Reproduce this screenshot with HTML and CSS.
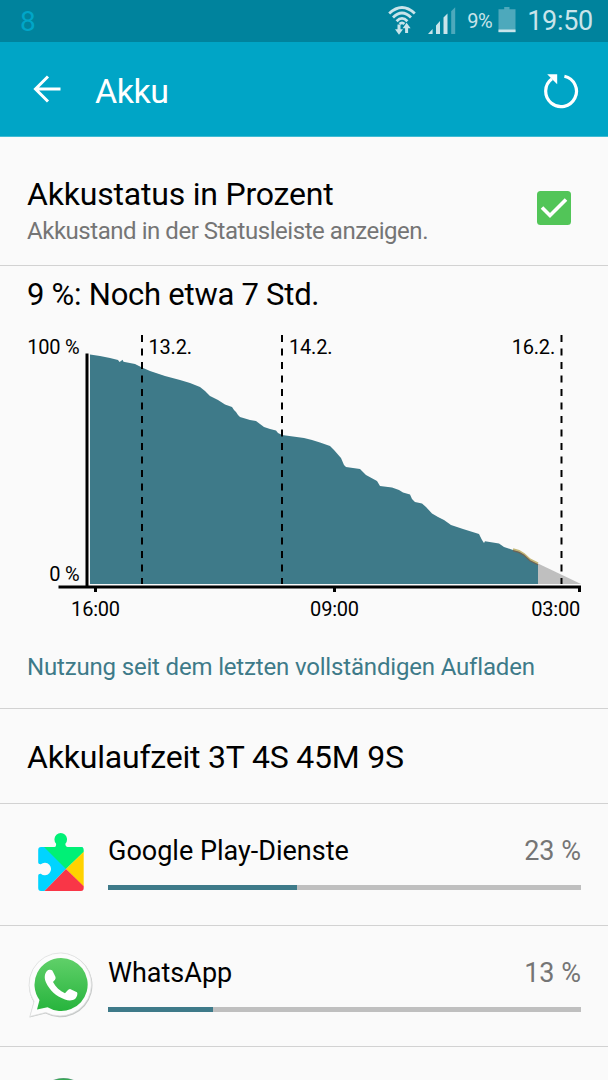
FILE: index.html
```html
<!DOCTYPE html>
<html lang="de">
<head>
  <meta charset="UTF-8" />
  <meta name="viewport" content="width=device-width, initial-scale=1.0" />
  <title>Akku</title>
  <link rel="stylesheet" href="styles.css">
</head>
<body>
  <div class="statusbar">
    <span class="notification">8</span>
    <div class="status-icons">
      <svg class="wifi" width="30" height="32" viewBox="0 0 30 32" fill="none" stroke="#c9e4ea" stroke-width="2.8">
        <path d="M2.2 9.5Q15 -2.5 27.8 9.5" />
        <path d="M6 13.5Q15 4.6 24 13.5" />
        <path d="M9.6 17.2Q15 11.6 20.4 17.2" />
        <path d="M12.6 20Q15 17.6 17.4 20" />
        <path d="M12 20.5v7M19.6 29v-7" stroke-width="3" />
        <path d="M8 25.2h8l-4 5.6zM15.6 24.3h8l-4-5.6z" fill="#c9e4ea" stroke="none" />
      </svg>
      <svg class="signal" width="28" height="28" viewBox="0 0 28 28" fill="#c9e4ea">
        <path d="M0 27L4.6 22V27zM8 27V18.5l4-4.5v13zM15.5 27V10.5l4-4v20.5z" />
        <path d="M23.2 27V4.2l4-4v26.8z" fill="#4da9bc" />
      </svg>
      <span class="percent">9%</span>
      <svg class="battery" width="18" height="26" viewBox="0 0 18 26">
        <path d="M6.2 0h5.3v2.3h6V25H.5V2.3h5.7z" fill="#4da9bc" />
        <path d="M.5 22.5h17v2.7H.5z" fill="#c9e4ea" />
      </svg>
      <span class="clock">19:50</span>
    </div>
  </div>

  <header class="header">
    <svg class="back" width="28" height="28" viewBox="0 0 28 28" fill="none" stroke="#fff" stroke-width="3">
      <path d="M15 1.5L2.5 14L15 26.5M2.5 14H27.5" />
    </svg>
    <h1>Akku</h1>
    <svg class="refresh" width="36" height="36" viewBox="0 0 36 36" fill="none" stroke="#fff" stroke-width="3.2">
      <path d="M21.4 3.2A15.4 15.4 0 1 1 9 5.8" />
      <path d="M4.2 1.2H14.2V11.2z" fill="#fff" stroke="none" />
    </svg>
  </header>

  <section class="setting">
    <div>
      <h2>Akkustatus in Prozent</h2>
      <p>Akkustand in der Statusleiste anzeigen.</p>
    </div>
    <svg class="checkbox" width="34" height="34" viewBox="0 0 34 34">
      <rect width="34" height="34" rx="3.5" fill="#52c558" />
      <path d="M5 16.5L13 24.5L29 8.5" fill="none" stroke="#fff" stroke-width="3.6" />
    </svg>
  </section>

  <section class="usage">
    <h2>9 %: Noch etwa 7 Std.</h2>
    <svg class="chart" width="608" height="300" viewBox="0 325 608 300">
      <!-- remaining time -->
      <path d="M538 563.5L581 584H538z" fill="#bfbfbf" />
      <!-- battery level -->
      <path fill="#3e7a89" d="M90 584V354.5L100 356L110 358L118 360L119.5 362L121 361L122.5 359.8L123.5 361.8L135 364L142 367.5L150 371L165 376L180 380L190 383L200 387L205 391L210 396L218 400L225 404.5L232 407L234 410L236 412L238 415L240 417L250 420L256 421L260 424L264 427L270 429L276 430.5L278 433L282 435L304 438L312 440L320 442.5L330 446L334 450L341 458L344 465L346 467L360 469L366 475L377 481L380 486L392 487.5L399 490L403 492.5L410 494.5L412 499L415 502L422 503.5L426 507L432 513.5L438 517L444 520L451 525L463 529L479 534L482 540L484 543L485 541.3L499 543.5L504 547L513 550L519 551.5L524 554L530 560L538 564V584z" />
      <path d="M513 549.3L519 551L524 554L530 559.5L538 563.3" fill="none" stroke="#c4b778" stroke-width="2" />
      <path d="M513 550.7L519 552.4L524 555.2L530 560.7L538 564.7" fill="none" stroke="#6f6355" stroke-width="1.2" />
      <path d="M142 335V584M282 335V584M561.5 335V584" stroke="#000" stroke-width="2" stroke-dasharray="7 6.5" />
      <path d="M58.5 587H581M87 353.5V587" stroke="#000" stroke-width="3" fill="none" />
      <path d="M95.5 587v5M334.5 587v5M579.5 587v5" stroke="#000" stroke-width="3" />
      <g class="chart-text">
        <text x="79.5" y="353.5" text-anchor="end">100 %</text>
        <text x="79.5" y="580.5" text-anchor="end">0 %</text>
        <text x="148.5" y="353.5">13.2.</text>
        <text x="289" y="353.5">14.2.</text>
        <text x="555" y="353.5" text-anchor="end">16.2.</text>
        <text x="95.5" y="616" text-anchor="middle">16:00</text>
        <text x="334.5" y="616" text-anchor="middle">09:00</text>
        <text x="580" y="616" text-anchor="end">03:00</text>
      </g>
    </svg>
    <p>Nutzung seit dem letzten vollständigen Aufladen</p>
  </section>

  <section class="runtime">
    <h2>Akkulaufzeit 3T 4S 45M 9S</h2>
  </section>

  <div class="app">
    <svg class="app-icon" width="66" height="66" viewBox="0 0 66 66">
      <defs>
        <clipPath id="puzzle">
          <path d="M13 17H26.5Q28.5 17 28 13.5A6.3 6.3 0 1 1 37.5 13.5Q37 17 39.5 17H53Q55.7 17 55.7 20V58Q55.7 61 53 61H13Q10.2 61 10.2 58V45.5Q10.2 43.5 12.8 43.7A6.2 6.2 0 1 0 12.8 34.3Q10.2 34.5 10.2 32.5V20Q10.2 17 13 17z" />
        </clipPath>
      </defs>
      <g clip-path="url(#puzzle)">
        <path d="M56 17L38 39L16.5 61H0V17H16z" fill="#00d4ff" />
        <path d="M0 0H66V12L38 39L16 17z" fill="#00f076" />
        <path d="M57 20.5V58L38 39z" fill="#ffd200" />
        <path d="M16 61.5L38 39L57 57.5V62z" fill="#f93647" />
      </g>
    </svg>
    <div class="app-info">
      <div class="app-label"><span>Google Play-Dienste</span><span class="value">23 %</span></div>
      <div class="bar"><div class="fill" style="width: 40%"></div></div>
    </div>
  </div>

  <div class="app">
    <svg class="app-icon" width="66" height="66" viewBox="0 0 66 66">
      <defs>
        <linearGradient id="green" x1="0" y1="0" x2="0" y2="1">
          <stop offset="0" stop-color="#60d069" />
          <stop offset="1" stop-color="#27b43d" />
        </linearGradient>
      </defs>
      <path d="M33 1.2A32 32 0 1 1 17.5 61.5L1.5 65.5L5.7 50A32 32 0 0 1 33 1.2z" fill="#c4c7c6" />
      <path d="M33 .9A31.5 31.5 0 1 1 17.7 60.5L1.9 64.5L6.1 49.5A31.5 31.5 0 0 1 33 .9z" fill="#fcfcfc" stroke="#dedfdf" stroke-width=".8" />
      <path d="M33 6A26.5 26.5 0 1 1 19.5 55.2L9 57.5L11.5 48A26.5 26.5 0 0 1 33 6z" fill="url(#green)" />
      <path d="M19 19C20 17.8 23 17.3 24.3 18.5C25.5 20.5 26.5 23 27.5 25C28 27 26.5 28.5 25 30C27.5 35 32 39 37 41.2C39 39.5 40 37 42 37L49 40.2C50 41.5 49 45 47.5 46.5C44.5 49 40.5 48.8 37 47.5C27.5 44 22 38.5 18 30.5C16 26 16.5 21.5 19 19z" fill="#fff" />
    </svg>
    <div class="app-info">
      <div class="app-label"><span>WhatsApp</span><span class="value">13 %</span></div>
      <div class="bar"><div class="fill" style="width: 22.2%"></div></div>
    </div>
  </div>

  <div class="app next">
    <svg class="app-icon" width="66" height="66" viewBox="0 0 66 66">
      <circle cx="35.5" cy="28" r="28" fill="#6f9c8e" />
      <circle cx="35.5" cy="28.6" r="28" fill="#35a852" />
    </svg>
  </div>
</body>
</html>
```
FILE: styles.css
```css
* {
  box-sizing: border-box;
}
body {
  margin: 0;
  height: 1080px;
  overflow: hidden;
  background: #fafafa;
  color: #000;
  font-family: Roboto, sans-serif;
}
h1, h2, p {
  margin: 0;
  font-weight: normal;
  white-space: nowrap;
}
svg {
  display: block;
  flex: none;
}
.statusbar {
  height: 42px;
  padding: 0 15px 0 20px;
  display: flex;
  justify-content: space-between;
  background: #00839d;
  color: #c9e4ea;
}
.notification {
  color: #00a6c8;
  font-size: 28px;
  line-height: 43px;
}
.status-icons {
  display: flex;
  align-items: flex-start;
}
.wifi {
  margin-top: 4px;
}
.signal {
  margin: 7px 0 0 11px;
}
.percent {
  margin-left: 11px;
  font-size: 20px;
  line-height: 42px;
  letter-spacing: -0.4px;
}
.battery {
  margin: 7px 0 0 6px;
}
.clock {
  margin-left: 11px;
  font-size: 27px;
  line-height: 43px;
  letter-spacing: -0.3px;
}
.header {
  height: 95px;
  padding: 0 29px 0 33px;
  display: flex;
  align-items: center;
  background: #00a5c6;
  border-bottom: 1px solid #40bbd3;
  color: #fff;
}
.header h1 {
  flex: 1;
  margin-left: 34px;
  padding-top: 4px;
  font-size: 34px;
  letter-spacing: -0.5px;
}
.refresh {
  margin-top: 4px;
}
.setting {
  height: 129px;
  padding: 14px 37px 0 27px;
  display: flex;
  align-items: center;
  justify-content: space-between;
  border-bottom: 1px solid #d2d2d2;
}
h2 {
  font-size: 32px;
  line-height: 40px;
  letter-spacing: -0.2px;
}
.setting h2 {
  padding-top: 5px;
}
.setting p {
  padding-top: 1px;
  font-size: 24px;
  line-height: 33px;
  letter-spacing: -0.46px;
  color: #757575;
}
.usage {
  height: 443px;
  padding-top: 8px;
  border-bottom: 1px solid #d2d2d2;
}
.usage h2 {
  padding: 1px 0 0 27px;
  font-size: 31px;
  letter-spacing: -0.25px;
}
.chart {
  margin-top: 10px;
}
.chart-text {
  font-size: 20px;
  letter-spacing: -0.2px;
}
.usage p {
  margin-top: 25px;
  padding-left: 27px;
  font-size: 24px;
  line-height: 34px;
  letter-spacing: -0.17px;
  color: #3e7a89;
}
.runtime {
  height: 95px;
  padding: 28px 27px 0;
  border-bottom: 1px solid #d2d2d2;
}
.app {
  height: 121.5px;
  padding: 27px 27px 0 28px;
  display: flex;
  border-bottom: 1px solid #d2d2d2;
}
.app-icon {
  margin-top: -1px;
}
.app-info {
  flex: 1;
  margin-left: 14px;
}
.app-label {
  display: flex;
  justify-content: space-between;
  font-size: 27px;
  line-height: 40px;
}
.value {
  color: #757575;
}
.bar {
  margin-top: 14px;
  height: 5px;
  background: #bfbfbf;
}
.fill {
  height: 5px;
  background: #3e7a89;
}
/* only the top edge of the next app is in view */
.next {
  height: 33px;
  padding-top: 32px;
  border-bottom: 0;
  overflow: hidden;
}
```
